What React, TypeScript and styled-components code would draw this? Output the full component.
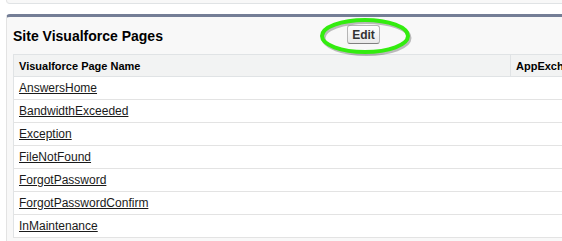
import React from "react"
import styled, {createGlobalStyle} from "styled-components"

const GlobalStyle = createGlobalStyle`
    html, body {
        margin: 0;
        padding: 0;
        background: #ffffff;
        overflow: hidden;
    }
    body {
        font-family: "Liberation Sans", Arial, sans-serif;
    }
`

const pages = [
    "AnswersHome",
    "BandwidthExceeded",
    "Exception",
    "FileNotFound",
    "ForgotPassword",
    "ForgotPasswordConfirm",
    "InMaintenance",
]

export default function App()
{
    return (
        <Page>
            <GlobalStyle/>
            <PrevBlock/>
            <Block>
                <BlockHeader>
                    <Title>Site Visualforce Pages</Title>
                    <ButtonWrap>
                        <Highlight width="100" height="44" viewBox="0 0 100 44">
                            <ellipse cx="50" cy="21" rx="43" ry="16" fill="none" stroke="rgba(0,0,0,0.25)" strokeWidth="4" transform="translate(1.5 2)"/>
                            <ellipse cx="50" cy="21" rx="43" ry="16" fill="none" stroke="#33ec0f" strokeWidth="4"/>
                        </Highlight>
                        <Button>Edit</Button>
                    </ButtonWrap>
                </BlockHeader>

                <Table>
                    <colgroup>
                        <col style={{width: 497}}/>
                        <col/>
                    </colgroup>
                    <thead>
                        <tr>
                            <HeadCell>Visualforce Page Name</HeadCell>
                            <HeadCell $divider>AppExchange Package Name</HeadCell>
                        </tr>
                    </thead>
                    <tbody>
                        {pages.map(name => (
                            <tr key={name}>
                                <Cell><PageLink href="#">{name}</PageLink></Cell>
                                <Cell></Cell>
                            </tr>
                        ))}
                    </tbody>
                </Table>
            </Block>
        </Page>
    )
}

const Page = styled.div`
    width: 562px;
    height: 241px;
    overflow: hidden;
    background: #ffffff;
`

const PrevBlock = styled.div`
    height: 3px;
    margin-left: 6px;
    background: #f8f8f8;
    border-left: 1px solid #e3e3e3;
    border-bottom: 1px solid #e0e3e5;
    border-bottom-left-radius: 4px;
`

const Block = styled.div`
    margin-top: 10px;
    margin-left: 6px;
    background: #f8f8f8;
    border-top: 3px solid #747e96;
    border-left: 1px solid #e3e3e3;
    border-top-left-radius: 4px;
    padding-left: 6px;
    height: 240px;
`

const BlockHeader = styled.div`
    display: flex;
    align-items: center;
    height: 37px;
`

const Title = styled.h2`
    margin: 0;
    width: 334px;
    font-size: 14px;
    font-weight: bold;
    color: #000;
`

const ButtonWrap = styled.div`
    position: relative;
    display: flex;
    align-items: center;
    margin-top: -2px;
`

const Highlight = styled.svg`
    position: absolute;
    left: -32px;
    top: -10px;
    pointer-events: none;
`

const Button = styled.button`
    width: 33px;
    height: 19px;
    padding: 0;
    font-family: "Liberation Sans", Arial, sans-serif;
    font-size: 12px;
    font-weight: bold;
    color: #333;
    background: linear-gradient(#ffffff, #e9e9e9);
    border: 1px solid #b5b5b5;
    border-bottom-color: #7f7f7f;
    border-radius: 3px;
`

const Table = styled.table`
    border-collapse: collapse;
    table-layout: fixed;
    width: 700px;
    background: #ffffff;
    border-top: 1px solid #e0e3e5;
    border-left: 1px solid #e0e3e5;
`

const HeadCell = styled.th<{$divider?: boolean}>`
    height: 21px;
    padding: 0 0 0 5px;
    text-align: left;
    font-size: 11px;
    font-weight: bold;
    color: #000;
    background: #f2f3f3;
    border-bottom: 1px solid #e0e3e5;
    border-left: ${p => p.$divider ? "1px solid #e0e3e5" : "none"};
    white-space: nowrap;
    overflow: hidden;
`

const Cell = styled.td`
    height: 22px;
    padding: 0 0 0 5px;
    font-size: 12px;
    border-bottom: 1px solid #e3e3e3;
`

const PageLink = styled.a`
    color: #1a1a1a;
    text-decoration: underline;
`
